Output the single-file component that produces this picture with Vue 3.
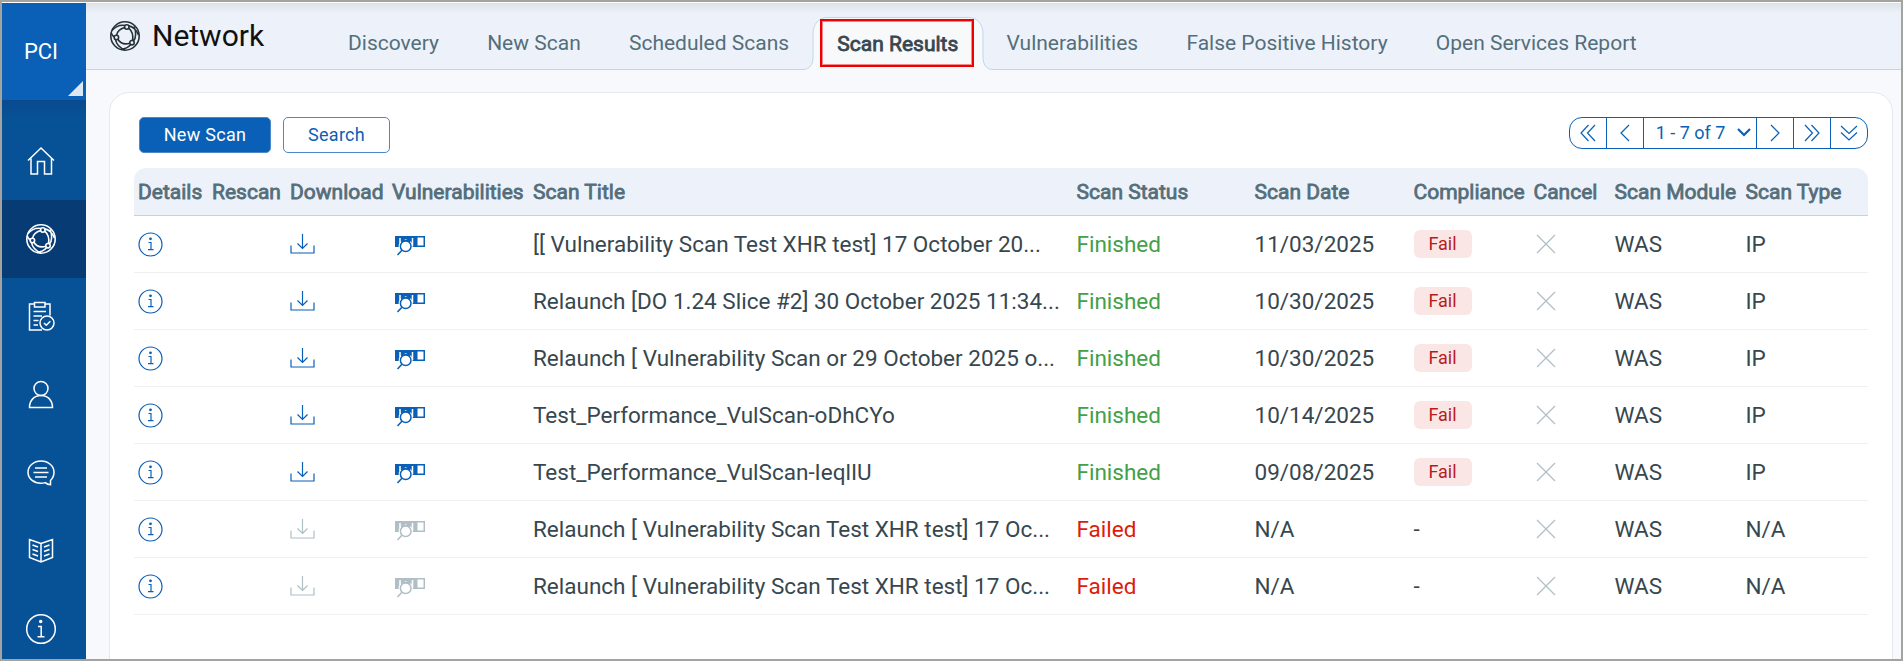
<template>
  <div class="frame">
    <aside class="sidebar">
      <div class="module">
        PCI
        <span class="corner"></span>
      </div>
      <nav class="side-nav">
        <a
          v-for="item in sideItems"
          :key="item"
          class="side-item"
          :class="[item, { active: item === 'network' }]"
        >
          <svg width="34" height="34" viewBox="0 0 34 34">
            <g v-if="item === 'home'">
              <path d="M4 17.500 17 5l13 12.500M7 15.500V31h6.500V18.500h7V31H27.500V15.500" />
            </g>
            <g v-else-if="item === 'network'" class="thick">
              <circle cx="17" cy="17" r="14.200" />
              <circle cx="18.800" cy="8" r="2.200" />
              <circle cx="8.400" cy="18.500" r="2.200" />
              <circle cx="24" cy="23.700" r="2.200" />
              <path :d="networkArcs" />
            </g>
            <g v-else-if="item === 'reports'">
              <path
                d="M10 4H5.500V30H18M20.500 4H26V15.500M10.500 2.500h10.500v4.500H10.500zM9.500 11.500H22M9.500 16H18M9.500 20.500H14.500M9.500 25H14"
              />
              <circle cx="23" cy="23" r="7" />
              <path d="M20 23l2.300 2.300 4-4" />
            </g>
            <g v-else-if="item === 'users'">
              <circle cx="17" cy="10.500" r="7" />
              <path d="M5.500 29.500C5.500 22.500 10 17.500 17 17.500S28.500 22.500 28.500 29.500Z" />
            </g>
            <g v-else-if="item === 'chat'">
              <path
                d="M26.500 28.700V24.500C28.700 22.400 30 19.400 30 16.300 30 9.800 24.200 5 17 5S4 9.800 4 16.300 9.800 27.200 17 27.200c1.600 0 2.900-.2 4.200-.6 1.500 1.300 3.300 2 5.300 2.100zM11 12H23M9.500 16.500H24.500M11 21H23"
              />
            </g>
            <g v-else-if="item === 'library'">
              <path
                d="M17 9.500 5.500 5.500V23.500L17 28 28.500 23.500V5.500zM17 9.500V28M8.500 11l5.500 2M8.500 15.500l5.500 2M8.500 20l5.500 2M25.500 11 20 13M25.500 15.500 20 17.500M25.500 20 20 22"
              />
            </g>
            <g v-else>
              <circle cx="17" cy="17" r="14.300" />
              <path d="M14 14.500H17.200V24.500M13.500 24.700H20.500" />
              <circle cx="16.700" cy="9.600" r="1" class="dot" />
            </g>
          </svg>
        </a>
      </nav>
    </aside>

    <div class="page">
      <header class="topbar">
        <svg class="title-icon thick" width="34" height="34" viewBox="0 0 34 34">
          <circle cx="17" cy="17" r="14.200" />
          <circle cx="18.800" cy="8" r="2.200" />
          <circle cx="8.400" cy="18.500" r="2.200" />
          <circle cx="24" cy="23.700" r="2.200" />
          <path :d="networkArcs" />
        </svg>
        <h1 class="title">Network</h1>
        <nav class="tabs">
          <a
            v-for="tab in tabs"
            :key="tab"
            class="tab"
            :class="{ current: tab === 'Scan Results' }"
          >
            <svg v-if="tab === 'Scan Results'" class="tab-shape" width="190" height="54" viewBox="0 0 190 54">
              <path class="fill" d="M0 54V52.500C7 52.500 10 47 10 40V17C10 7 16 .5 24 .5H166C174 .5 180 7 180 17V40C180 47 183 52.500 190 52.500V54Z" />
              <path class="line" d="M0 52.500C7 52.500 10 47 10 40V17C10 7 16 .5 24 .5H166C174 .5 180 7 180 17V40C180 47 183 52.500 190 52.500" />
            </svg>
            <span v-if="tab === 'Scan Results'" class="highlight"></span>
            <span class="tab-label">{{ tab }}</span>
          </a>
        </nav>
      </header>

      <main class="card">
        <div class="toolbar">
          <button class="btn primary">New Scan</button>
          <button class="btn">Search</button>
          <div class="pager">
            <button class="pg">
              <svg width="18" height="18" viewBox="0 0 18 18"><path d="M9.500 1 2 9l7.500 8M16 1 8.500 9l7.500 8" /></svg>
            </button>
            <button class="pg">
              <svg width="18" height="18" viewBox="0 0 18 18"><path d="M13 1 5 9l8 8" /></svg>
            </button>
            <button class="pg range">
              1 - 7 of 7
              <svg class="caret" width="14" height="9" viewBox="0 0 14 9"><path d="M1 1l6 6 6-6" /></svg>
            </button>
            <button class="pg">
              <svg width="18" height="18" viewBox="0 0 18 18"><path d="M5 1l8 8-8 8" /></svg>
            </button>
            <button class="pg">
              <svg width="18" height="18" viewBox="0 0 18 18"><path d="M2 1l7.500 8L2 17M8.500 1 16 9l-7.500 8" /></svg>
            </button>
            <button class="pg">
              <svg width="18" height="18" viewBox="0 0 18 18"><path d="M1 2l8 7.500L17 2M1 8.500 9 16l8-7.500" /></svg>
            </button>
          </div>
        </div>

        <div class="table">
          <div class="row head">
            <span v-for="col in columns" :key="col">{{ col }}</span>
          </div>
          <div v-for="(scan, i) in scans" :key="i" class="row" :class="{ disabled: scan.status === 'Failed' }">
            <span>
              <svg class="icon info" width="25" height="25" viewBox="0 0 25 25">
                <circle cx="12.500" cy="12.500" r="11.500" />
                <path d="M10.500 10.500H13V17.500M10 17.700H15.500" />
                <circle cx="12.500" cy="6.800" r=".8" class="dot" />
              </svg>
            </span>
            <span></span>
            <span>
              <svg class="icon dim" width="25" height="22" viewBox="0 0 25 22">
                <path d="M12.500 1V15M7.500 10.500l5 5 5-5M1 12.500V20H24V12.500" />
              </svg>
            </span>
            <span>
              <svg class="icon dim vuln" width="30" height="20" viewBox="0 0 30 20">
                <path class="solid" d="M0 0H30V11H0Z" />
                <path class="gap" d="M5 2V7M17.500 2V10" />
                <rect class="white" x="22.500" y="1.500" width="6" height="8" />
                <circle class="white" cx="10.700" cy="10.200" r="7" />
                <path class="solid" d="M4 2V0H17V2ZM6 5 8 2.500 10.700 4 13.500 2.500 15.500 5V6H6Z" />
                <circle class="white lens" cx="10.700" cy="10.200" r="5.300" />
                <path d="M6.900 14.200 2.500 19" />
              </svg>
            </span>
            <span>{{ scan.title }}</span>
            <span :class="scan.status === 'Finished' ? 'finished' : 'failed'">{{ scan.status }}</span>
            <span>{{ scan.date }}</span>
            <span>
              <b v-if="scan.compliance === 'Fail'" class="badge">Fail</b>
              <template v-else>{{ scan.compliance }}</template>
            </span>
            <span>
              <svg class="icon cross" width="20" height="20" viewBox="0 0 20 20"><path d="M1 1l18 18M19 1 1 19" /></svg>
            </span>
            <span>WAS</span>
            <span>{{ scan.type }}</span>
          </div>
        </div>
      </main>
    </div>
  </div>
</template>

<script setup>
const sideItems = ["home", "network", "reports", "users", "chat", "library", "info"];

// arcs that link the three nodes of the network globe
const networkArcs =
  "M16.700 8.600C12 10 9.200 12.500 8.600 16.200M20.700 9.200C24 12 25.300 17 24.500 21.400M21.900 24.200C17 25.700 12.500 24.500 9.800 20.300M4 11.500C8 7 12.500 5.500 17.200 6.500M20.700 6.900C25 7.500 29 11.500 30.500 16M7.500 20.600C8.500 25.500 12 29 17 30.900M22.800 25.600C20.500 28.300 17.500 30 13 30.500M25.500 22C28 19 28.500 13 26 7.500M6.300 18C5 17 3.800 15.500 3.200 14";

const tabs = [
  "Discovery",
  "New Scan",
  "Scheduled Scans",
  "Scan Results",
  "Vulnerabilities",
  "False Positive History",
  "Open Services Report",
];

const columns = [
  "Details",
  "Rescan",
  "Download",
  "Vulnerabilities",
  "Scan Title",
  "Scan Status",
  "Scan Date",
  "Compliance",
  "Cancel",
  "Scan Module",
  "Scan Type",
];

const scans = [
  { title: "[[ Vulnerability Scan Test XHR test] 17 October 20...", status: "Finished", date: "11/03/2025", compliance: "Fail", type: "IP" },
  { title: "Relaunch [DO 1.24 Slice #2] 30 October 2025 11:34...", status: "Finished", date: "10/30/2025", compliance: "Fail", type: "IP" },
  { title: "Relaunch [ Vulnerability Scan or 29 October 2025 o...", status: "Finished", date: "10/30/2025", compliance: "Fail", type: "IP" },
  { title: "Test_Performance_VulScan-oDhCYo", status: "Finished", date: "10/14/2025", compliance: "Fail", type: "IP" },
  { title: "Test_Performance_VulScan-IeqlIU", status: "Finished", date: "09/08/2025", compliance: "Fail", type: "IP" },
  { title: "Relaunch [ Vulnerability Scan Test XHR test] 17 Oc...", status: "Failed", date: "N/A", compliance: "-", type: "N/A" },
  { title: "Relaunch [ Vulnerability Scan Test XHR test] 17 Oc...", status: "Failed", date: "N/A", compliance: "-", type: "N/A" },
];
</script>

<style>
body {
  margin: 0;
  overflow: hidden;
}
</style>

<style scoped>
.frame {
  box-sizing: border-box;
  width: 1903px;
  height: 661px;
  display: flex;
  padding-top: 1px;
  border: 2px solid #a3a3a0;
  background: #fff;
  overflow: hidden;
  font-family: Roboto, "Liberation Sans", sans-serif;
  font-size: 22.5px;
  color: #37474f;
}

svg {
  display: block;
  fill: none;
  stroke: currentColor;
  stroke-width: 1.5;
}

.dot {
  fill: currentColor;
}

/* Sidebar */
.sidebar {
  flex: none;
  width: 84px;
  background: #075196;
  color: #fff;
}

.module {
  position: relative;
  height: 97px;
  font-size: 22px;
  line-height: 97px;
  text-align: center;
  text-indent: -6px;
  background: #0a5fb6;
}

.corner {
  position: absolute;
  right: 3px;
  bottom: 4px;
  border-left: 15px solid transparent;
  border-bottom: 15px solid #dce7f5;
}

.side-item {
  display: flex;
  align-items: center;
  justify-content: center;
  height: 78px;
  padding-right: 6px;
}

.side-item.home {
  box-sizing: border-box;
  height: 100px;
  padding-top: 19px;
  background: linear-gradient(#094a8e, #075196 18px);
}

.side-item.active {
  background: #073b73;
}

.thick {
  stroke-width: 1.6;
}

/* Header */
.page {
  flex: 1;
  min-width: 0;
  background: #f8f9fd;
}

.topbar {
  box-sizing: border-box;
  height: 67px;
  display: flex;
  align-items: flex-start;
  border-bottom: 1px solid #c0d6ec;
  background: linear-gradient(#dde2e9, #edf2fa 10px);
}

.title-icon {
  margin: 16px 0 0 22px;
  color: #263238;
}

.title {
  width: 196px;
  margin: 13px 0 0 10px;
  font-size: 30px;
  font-weight: 400;
  line-height: 40px;
  color: #111;
}

.tabs {
  display: flex;
  gap: 48.2px;
  height: 66px;
}

.tab {
  position: relative;
  font-size: 21px;
  line-height: 80px;
  white-space: nowrap;
  color: #546e7a;
}

.tab.current {
  line-height: 82px;
  color: #37474f;
  -webkit-text-stroke: 0.8px;
}

.tab-label {
  position: relative;
}

.tab-shape {
  position: absolute;
  left: -34px;
  top: 14px;
}

.tab-shape .fill {
  fill: #f8f9fb;
  stroke: none;
}

.tab-shape .line {
  stroke: #c0d6ec;
  stroke-width: 1;
}

.highlight {
  position: absolute;
  left: -17px;
  top: 16px;
  width: 150px;
  height: 44px;
  border: 2px solid #f00000;
  box-shadow: inset 0 0 0 1px rgba(240, 0, 0, 0.45);
}

/* Content */
.card {
  box-sizing: border-box;
  width: 1784px;
  height: 600px;
  margin: 22px 0 0 23px;
  padding: 24px;
  border: 1px solid #e6e8ee;
  border-radius: 20px;
  background: #fff;
}

.toolbar {
  display: flex;
  gap: 12px;
  height: 51px;
  padding-left: 5px;
}

.btn {
  box-sizing: border-box;
  width: 107px;
  height: 36px;
  padding: 0 0 2px;
  border: 1px solid #4c88c8;
  border-radius: 5px;
  background: #fff;
  font: 400 18px Roboto, sans-serif;
  letter-spacing: 0.3px;
  color: #0a5fb6;
}

.btn.primary {
  width: 132px;
  background: #0a5fb6;
  color: #fff;
}

.pager {
  box-sizing: border-box;
  display: flex;
  width: 299px;
  height: 32px;
  margin-left: auto;
  border: 1px solid #0a5fb6;
  border-radius: 13px;
}

.pg {
  display: flex;
  flex: none;
  align-items: center;
  justify-content: center;
  box-sizing: border-box;
  width: 37px;
  padding: 0;
  border: 0;
  border-right: 1px solid #0a5fb6;
  background: none;
  font: 400 18px Roboto, sans-serif;
  color: #0a5fb6;
}

.pg:last-child {
  width: 36px;
  border-right: 0;
}

.pg svg {
  stroke-width: 1.2;
}

.pg.range {
  width: 113px;
  gap: 12px;
  padding: 0 0 1px 7px;
}

.pg .caret {
  stroke-width: 2.2;
}

.row {
  display: grid;
  grid-template-columns: 74px 78px 102px 141px 543.5px 178px 159px 120px 81px 131px 1fr;
  align-items: center;
  box-sizing: border-box;
  height: 57px;
  padding-left: 4px;
  border-bottom: 1px solid #eff0f1;
  line-height: 30px;
  white-space: nowrap;
}

.row.head {
  height: 48px;
  border-bottom-color: #c3d3e6;
  border-radius: 12px 12px 0 0;
  background: #edf2fa;
  font-size: 21px;
  color: #546e7a;
  -webkit-text-stroke: 0.8px;
}

.icon {
  stroke-width: 1.2;
  color: #0a5fb6;
}

.disabled .dim,
.icon.cross {
  color: #b0bec5;
}

.icon.cross {
  margin-left: 2px;
}

.vuln {
  margin: 3px 0 0 3px;
}

.vuln path {
  stroke-width: 1.5;
}

.vuln .solid {
  fill: currentColor;
  stroke: none;
}

.vuln .gap {
  stroke: #fff;
}

.white {
  fill: #fff;
  stroke: none;
}

.white.lens {
  stroke: currentColor;
  stroke-width: 1.5;
}

.finished {
  color: #43a047;
}

.failed {
  color: #dd1c0c;
}

.badge {
  display: block;
  width: 58px;
  height: 28px;
  border-radius: 6px;
  background: #fbe6e6;
  font-size: 18px;
  font-weight: 400;
  line-height: 28px;
  text-align: center;
  color: #b71c1c;
}
</style>
